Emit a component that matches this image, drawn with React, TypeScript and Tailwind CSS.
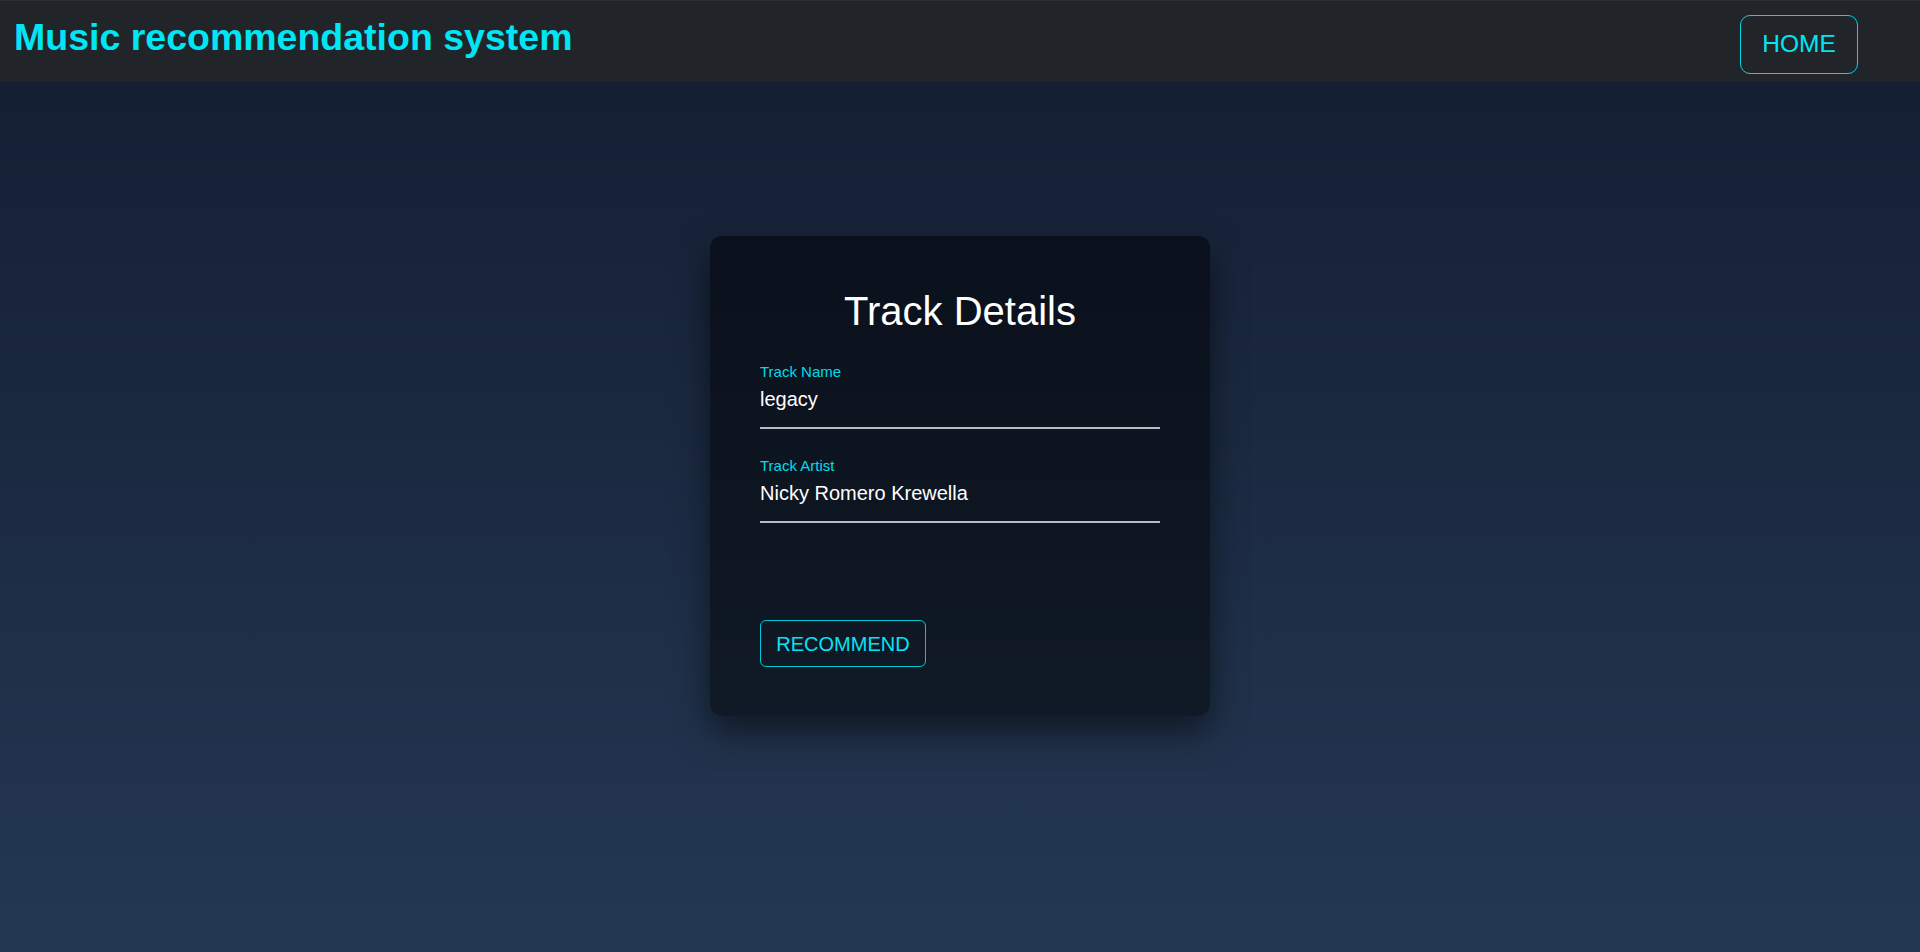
import React from 'react'

const Field = ({ label, value, top }: { label: string; value: string; top: string }) => {
    return (
        <div className={`${top} border-b-2 border-[#b9bdc3] pb-[16px]`}>
            <div className="text-[15px] leading-[17px] text-[#00dcea]">{label}</div>
            <div className="mt-[8px] text-[20px] leading-[23px] text-white">{value}</div>
        </div>
    )
}

export default function App() {
    return (
        <div className="h-screen flex flex-col overflow-hidden bg-linear-to-b from-[#131d31] to-[#243853]" style={{ fontFamily: '"Liberation Sans", Arial, sans-serif' }}>
            <header className="h-[82px] shrink-0 bg-[#212428] border-t border-[#2c2f34] flex items-start justify-between">
                <h1 className="ml-[14px] mt-[15px] text-[37.5px] font-bold leading-[42px] text-[#00e6f5]">
                    Music recommendation system
                </h1>
                <button className="mt-[14px] mr-[62px] w-[118px] h-[59px] rounded-[10px] border border-[#00d8e8] text-[24.5px] text-[#00e6f5]">
                    HOME
                </button>
            </header>

            <main className="flex-1 flex justify-center pt-[154px]">
                <div className="w-[500px] h-[480px] rounded-[12px] px-[50px] pt-[52px] bg-linear-to-b from-[#0a111c] to-[#101926] shadow-[0_16px_34px_rgba(0,0,0,0.5)]">
                    <h2 className="text-center text-[40px] leading-[46px] text-white">Track Details</h2>
                    <Field label="Track Name" value="legacy" top="mt-[29px]" />
                    <Field label="Track Artist" value="Nicky Romero Krewella" top="mt-[28px]" />
                    <button className="mt-[97px] w-[166px] h-[47px] rounded-[6px] border border-[#00c8d8] text-[20px] text-[#00e6f5]">
                        RECOMMEND
                    </button>
                </div>
            </main>
        </div>
    )
}
